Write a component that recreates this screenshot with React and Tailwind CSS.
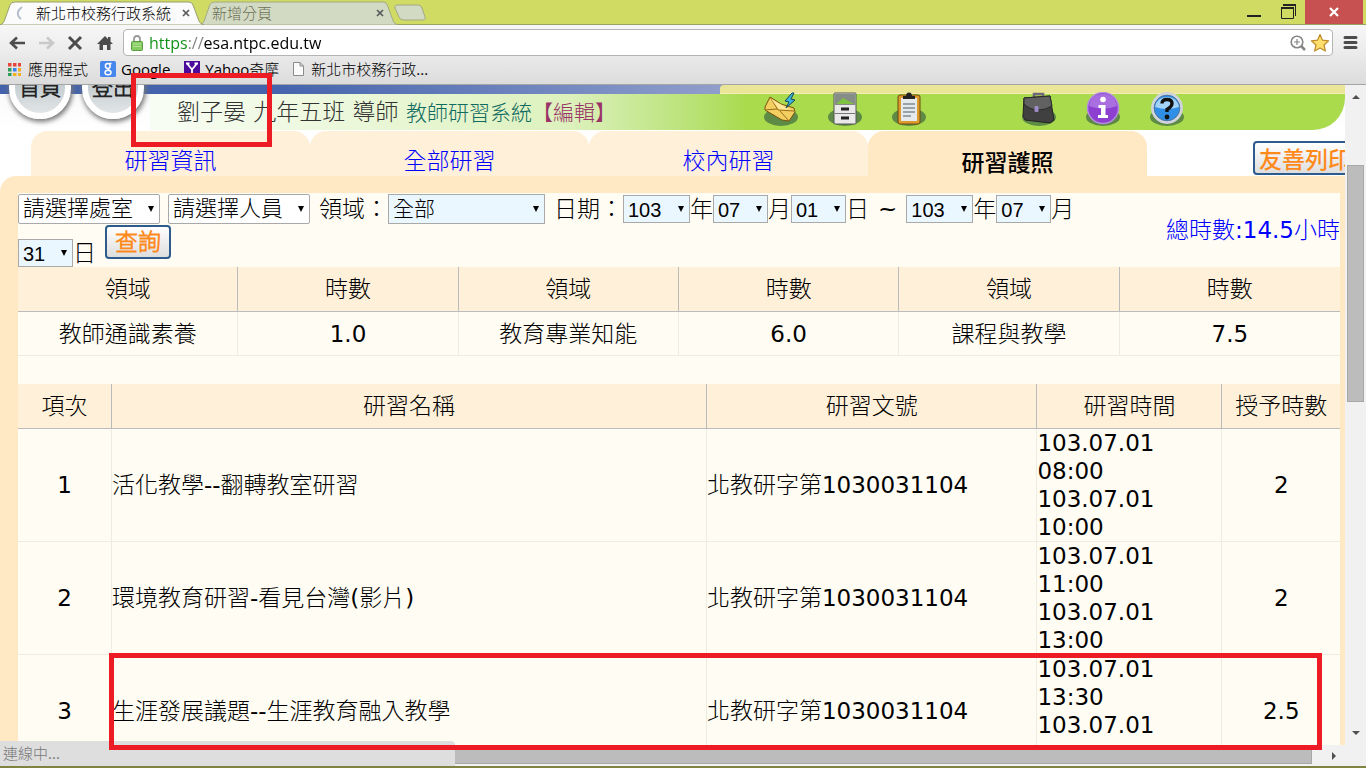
import React from "react";

const tabs = ["研習資訊", "全部研習", "校內研習", "研習護照"];

const summary = [
  { field: "教師通識素養", hours: "1.0" },
  { field: "教育專業知能", hours: "6.0" },
  { field: "課程與教學", hours: "7.5" },
];

const courses = [
  { id: 1, name: "活化教學--翻轉教室研習", doc: "北教研字第1030031104", time: ["103.07.01", "08:00", "103.07.01", "10:00"], hours: "2" },
  { id: 2, name: "環境教育研習-看見台灣(影片)", doc: "北教研字第1030031104", time: ["103.07.01", "11:00", "103.07.01", "13:00"], hours: "2" },
  { id: 3, name: "生涯發展議題--生涯教育融入教學", doc: "北教研字第1030031104", time: ["103.07.01", "13:30", "103.07.01"], hours: "2.5" },
];

function TabShape({ fill, stroke }) {
  return (
    <svg className="absolute inset-0 h-full w-full" viewBox="0 0 204 24" preserveAspectRatio="none" aria-hidden="true">
      <path d="M0 24 C3 23 4 21 5 18 L10 4 Q11 1 15 1 H189 Q192 1 193 4 L199 20 Q200 23 204 24 Z" fill={fill} stroke={stroke} />
    </svg>
  );
}

function CloseX() {
  return (
    <svg className="h-2 w-2" viewBox="0 0 8 8" aria-hidden="true">
      <path d="M1 1 L7 7 M7 1 L1 7" stroke="#5a5a5a" strokeWidth="1.7" />
    </svg>
  );
}

function TitleBar() {
  return (
    <div className="flex h-[25px] shrink-0 border-b border-[#9aa060] bg-[#cfdb63] text-[15px] leading-5">
      <div className="relative z-10 mt-px h-6 w-[204px]">
        <TabShape fill="#fbfbfb" stroke="#9a9f70" />
        <div className="relative flex h-full items-center pl-4 pr-[14px]">
          <svg className="mr-1 h-4 w-4 shrink-0" viewBox="0 0 16 16" aria-hidden="true">
            <path d="M6 2 Q-2 8 5 14" fill="none" stroke="#b3bccb" strokeWidth="1.8" />
          </svg>
          <span className="flex-1 whitespace-nowrap text-black">新北市校務行政系統</span>
          <button type="button" aria-label="關閉分頁"><CloseX /></button>
        </div>
      </div>
      <div className="relative -ml-1 mt-px h-6 w-[198px]">
        <TabShape fill="#d2dac4" stroke="#a2a985" />
        <div className="relative flex h-full items-center pl-3 pr-[14px]">
          <span className="flex-1 whitespace-nowrap text-[#6d6f56]">新增分頁</span>
          <button type="button" aria-label="關閉分頁"><CloseX /></button>
        </div>
      </div>
      <button type="button" aria-label="新增分頁" className="-ml-1 h-[25px] w-9">
        <svg className="h-full w-full" viewBox="0 0 36 25" aria-hidden="true">
          <path d="M1 8 Q0 5 4 5 H24 Q27 5 28 8 L31 17 Q32 20 28 20 H10 Q6 20 5 17 Z" fill="#d2dac4" stroke="#a2a985" />
        </svg>
      </button>
      <div className="ml-auto flex h-6">
        <button type="button" aria-label="最小化" className="flex w-9 justify-center">
          <svg className="h-6 w-4" viewBox="0 0 16 24"><path d="M2 16 H16" stroke="#222" strokeWidth="2" /></svg>
        </button>
        <button type="button" aria-label="還原" className="flex w-[34px] justify-center">
          <svg className="h-6 w-4" viewBox="0 0 16 24" fill="none" stroke="#222">
            <path d="M1.5 7.5 H13.5 V18.5 H1.5 Z" />
            <path d="M1 8 H14 M3 5 H16" strokeWidth="2" />
            <path d="M15.5 4 V16" />
          </svg>
        </button>
        <button type="button" aria-label="關閉" className="mr-[3px] flex w-[58px] items-center justify-center bg-[#c75050]">
          <svg className="h-[10px] w-[10px]" viewBox="0 0 10 10"><path d="M1 1 L9 9 M9 1 L1 9" stroke="#fff" strokeWidth="2.2" /></svg>
        </button>
      </div>
    </div>
  );
}

function Toolbar() {
  return (
    <div className="flex h-[33px] shrink-0 items-center bg-linear-to-b from-[#f7f7f7] to-[#e9e9e9] pl-2 pt-[2px]">
      <button type="button" aria-label="上一頁">
        <svg className="h-[18px] w-[18px]" viewBox="0 0 18 18" fill="none" stroke="#4c4c4c" strokeWidth="2.6"><path d="M17 9 H3 M9 3.5 L3 9 L9 14.5" /></svg>
      </button>
      <button type="button" aria-label="下一頁" className="ml-3">
        <svg className="h-[18px] w-[18px]" viewBox="0 0 18 18" fill="none" stroke="#c9c9c9" strokeWidth="2.6"><path d="M1 9 H14 M9 3.5 L15 9 L9 14.5" /></svg>
      </button>
      <button type="button" aria-label="停止" className="ml-[10px]">
        <svg className="h-[18px] w-[18px]" viewBox="0 0 18 18" stroke="#4c4c4c" strokeWidth="3"><path d="M3 3 L15 15 M15 3 L3 15" /></svg>
      </button>
      <button type="button" aria-label="首頁" className="ml-3">
        <svg className="h-[18px] w-[18px]" viewBox="0 0 18 18" fill="#4c4c4c">
          <path d="M9 2 L1 10 H3.5 V16 H7 V11 H11 V16 H14.5 V10 H17 L14.5 7.5 V3 H12 V5 Z" />
        </svg>
      </button>
      <div className="ml-[9px] flex h-[27px] flex-1 items-center rounded-sm border border-[#b4b4b4] bg-white pl-[7px] pr-[2px]">
        <svg className="h-[18px] w-3 shrink-0" viewBox="0 0 12 18" aria-hidden="true">
          <path d="M3 9 V5 Q3 2 6 2 Q9 2 9 5 V9" fill="none" stroke="#9a9a9a" strokeWidth="1.8" />
          <rect x="0.5" y="7.5" width="11" height="9" rx="1" fill="#86cc63" stroke="#5a9e43" />
          <path d="M2 10 H10 M2 12.5 H10" stroke="#b4e29a" />
        </svg>
        <input
          aria-label="網址"
          className="ml-[6px] h-full min-w-0 flex-1 bg-[linear-gradient(to_right,#0b8f12_39px,#808080_39px,#808080_54px,#000_54px)] bg-clip-text text-base text-transparent caret-black outline-none"
          defaultValue="https://esa.ntpc.edu.tw"
        />
        <svg className="h-4 w-4" viewBox="0 0 16 16" fill="none" stroke="#858585" aria-hidden="true">
          <circle cx="7" cy="7" r="5.8" strokeWidth="1.6" />
          <path d="M4 7 H10 M7 4 V10" strokeWidth="1.2" />
          <path d="M11 11 L15 15" strokeWidth="2.5" />
        </svg>
        <button type="button" aria-label="加入書籤" className="ml-1">
          <svg className="h-5 w-5" viewBox="0 0 20 20"><path d="M10 1.5 L12.5 7.2 L18.6 7.8 L14 12 L15.4 18 L10 14.9 L4.6 18 L6 12 L1.4 7.8 L7.5 7.2 Z" fill="#ffdf6b" stroke="#c08a2c" strokeWidth="1.2" strokeLinejoin="round" /></svg>
        </button>
      </div>
      <button type="button" aria-label="選單" className="ml-[10px] mr-2">
        <svg className="h-[15px] w-[15px]" viewBox="0 0 15 15" stroke="#4c4c4c" strokeWidth="3" strokeLinecap="round"><path d="M2 2.5 H13 M2 7.5 H13 M2 12.5 H13" /></svg>
      </button>
    </div>
  );
}

function BookmarksBar() {
  const dots = ["#e5453c", "#e5453c", "#e5453c", "#2b9c5a", "#3b82f0", "#f0b021", "#2b9c5a", "#f0b021", "#f0b021"];
  return (
    <nav className="flex h-[27px] shrink-0 items-center border-b border-[#a5a5a5] bg-linear-to-b from-[#e8e8e8] to-[#dcdcdc] pb-1 pl-2 text-[15px] leading-5 whitespace-nowrap">
      <a href="#apps" className="flex items-center">
        <svg className="mr-[7px] h-[13px] w-[13px]" viewBox="0 0 13 13" aria-hidden="true">
          {dots.map((c, i) => <rect key={i} x={(i % 3) * 5} y={Math.floor(i / 3) * 5} width="3.5" height="3.5" fill={c} />)}
        </svg>
        應用程式
      </a>
      <a href="#google" className="ml-3 flex items-center">
        <svg className="mr-[5px] h-4 w-4" viewBox="0 0 16 16" aria-hidden="true">
          <rect width="16" height="16" rx="1.5" fill="#4787ed" />
          <g fill="none" stroke="#fff" strokeWidth="1.5"><circle cx="7.8" cy="5" r="2.4" /><ellipse cx="8" cy="11.5" rx="3" ry="2.3" /><path d="M9 2.5 H11.5 M8 7.5 L9 9" /></g>
        </svg>
        Google
      </a>
      <a href="#yahoo" className="ml-[14px] flex items-center">
        <svg className="mr-[5px] h-4 w-4" viewBox="0 0 16 16" aria-hidden="true">
          <rect width="16" height="16" fill="#4b0a9b" />
          <path d="M3 2.5 L8 8.5 V14 M8 8.5 L13 2.5 M2 2.5 H5.5 M10.5 2.5 H14 M6 13.5 H10" fill="none" stroke="#fff" strokeWidth="1.8" />
        </svg>
        Yahoo奇摩
      </a>
      <a href="#school" className="ml-[14px] flex items-center">
        <svg className="mr-[7px] h-[14px] w-[11px]" viewBox="0 0 11 14" aria-hidden="true">
          <path d="M0.5 0.5 H7 L10.5 4 V13.5 H0.5 Z M7 0.5 V4 H10.5" fill="#fafafa" stroke="#8c8c8c" />
        </svg>
        新北市校務行政...
      </a>
    </nav>
  );
}

function RoundButton({ children }) {
  return (
    <button type="button" className="h-[62px] w-[62px] rounded-full border-[6px] border-white bg-linear-to-b from-[#aebbc2] to-[#e2e5e6] text-[21px] font-bold whitespace-nowrap text-[#222] shadow-[1px_2px_5px_1px_#777]">
      <span className="-mx-2">{children}</span>
    </button>
  );
}

function ToolIcon({ label, className = "", children }) {
  return (
    <a href="#tool" aria-label={label} className={className}>
      <svg className="h-9 w-9" viewBox="0 0 36 36">
        <ellipse cx="18" cy="25" rx="17" ry="9" fill="#5d8a45" />
        {children}
      </svg>
    </a>
  );
}

function ToolIcons() {
  return (
    <div className="mr-40 mb-1 ml-auto flex shrink-0 items-center gap-7">
      <ToolIcon label="訊息">
        <path d="M7 5 L18 12 L31 16 L32 20 L26 29 L19 28 L2 18 L2 15 Z" fill="#f3cf62" stroke="#7a5311" strokeLinejoin="round" />
        <path d="M7 5 L15 18 L31 19 M2 18 L14 17 M17 19 L26 29" fill="none" stroke="#9a6b18" />
        <path d="M8 7 L16 17 L28 18 Z" fill="#ffe89b" />
        <path d="M29 1 L22 9 L26 10 L23 16 L32 8 L28 7 L31 1 Z" fill="#3cb3d8" stroke="#164457" />
      </ToolIcon>
      <ToolIcon label="檔案櫃">
        <rect x="7" y="1" width="22" height="31" rx="1" fill="#e9e9e9" stroke="#555" />
        <rect x="7.5" y="2" width="21" height="11" fill="#868d87" />
        <path d="M9 12 L16 6 L27 12 Z" fill="#7ec242" />
        <path d="M8 21.5 H28" stroke="#777" />
        <path d="M14 17 H22 M14 26 H22" stroke="#222" strokeWidth="3" />
      </ToolIcon>
      <ToolIcon label="公告">
        <rect x="7" y="3" width="22" height="29" rx="2" fill="#dd9b2e" stroke="#6c480f" />
        <rect x="10" y="6" width="16" height="23" fill="#e5e9ec" />
        <path d="M12 12 H24 M12 16 H24 M12 20 H24 M12 24 H20" stroke="#7f8b96" strokeWidth="1.5" />
        <path d="M12 7 V4 H15 Q15 0.5 18 0.5 Q21 0.5 21 4 H24 V7 Z" fill="#222" />
      </ToolIcon>
      <ToolIcon label="公事包" className="ml-[66px]">
        <path d="M13 6 V2 H22 V5" fill="none" stroke="#6f6878" strokeWidth="2.5" />
        <path d="M3 6 L29 4 L33 28 L29 31 L4 28 L2 24 Z" fill="#404040" stroke="#222" />
        <path d="M3 6 L29 4 L31 14 Q24 18 18 18 Q9 18 3 12 Z" fill="#616161" stroke="#2a2a2a" />
        <rect x="13.5" y="14" width="4" height="6" rx="1" fill="#9c8bc4" />
      </ToolIcon>
      <ToolIcon label="資訊">
        <circle cx="18" cy="16" r="15.5" fill="#8d3fd0" stroke="#b58de0" strokeWidth="1.5" />
        <path d="M4 14 Q6 2 18 2 Q30 2 32 14 Q18 19 4 14 Z" fill="#a96fe0" />
        <circle cx="18" cy="7.5" r="2.8" fill="#fff" />
        <path d="M13.5 13 H20.5 V23 H23 V26 H13 V23 H16 V16 H13.5 Z" fill="#fff" />
      </ToolIcon>
      <ToolIcon label="說明">
        <circle cx="18" cy="16" r="14.4" fill="#2f8ee5" stroke="#cfd3dc" strokeWidth="3" />
        <circle cx="18" cy="16" r="12.8" fill="none" stroke="#5076a0" />
        <path d="M6 15 Q8 5 18 5 Q28 5 30 15 Q18 19 6 15 Z" fill="#a5d2f7" />
        <path d="M13 11.5 Q13 7.5 18 7.5 Q23 7.5 23 11.5 Q23 14.5 18 17.5 V20" fill="none" stroke="#111" strokeWidth="3.4" />
        <circle cx="18" cy="25" r="2.4" fill="#111" />
      </ToolIcon>
    </div>
  );
}

function SiteHeader() {
  return (
    <header className="relative shrink-0">
      <div className="flex h-[9px] bg-linear-to-r from-[#4463ac] from-20% to-[#93a0cc] to-55%">
        <div className="ml-auto w-[625px] max-w-1/2 rounded-tl-sm border-b border-[#f6edb5] bg-[#ebe697]" />
      </div>
      <div className="flex h-9 bg-linear-to-b from-[#fafafa] to-white">
        <div className="ml-[150px] flex flex-1 items-center rounded-br-[32px] bg-linear-to-r from-[#f8fdf4] via-[#ddf1bd] via-35% to-[#a9db4c] to-50% pl-[27px]">
          <p className="text-[23px] whitespace-nowrap text-[#333]">
            劉子晏 九年五班 導師{" "}
            <span className="text-[21px] text-[#0f6a5f]">教師研習系統</span>
            <a href="#edit" className="text-[21px] text-[#993366]">【編輯】</a>
          </p>
          <ToolIcons />
        </div>
      </div>
      <div className="absolute -top-7 left-[9px] flex gap-[11px]">
        <RoundButton>首頁</RoundButton>
        <RoundButton>登出</RoundButton>
      </div>
    </header>
  );
}

function ImageButton({ className = "", children }) {
  return (
    <button type="button" className={`h-[34px] shrink-0 rounded-sm border-2 border-[#2d5c8c] bg-linear-to-b from-white to-[#dedede] text-[23px] leading-7 whitespace-nowrap text-[#ff8a1c] ${className}`}>
      {children}
    </button>
  );
}

function PageTabs() {
  return (
    <nav className="flex shrink-0 bg-white pt-px pl-[31px]">
      {tabs.map((t, i) => (
        <a
          key={t}
          href="#tab"
          className={
            i === tabs.length - 1
              ? "flex h-[45px] w-[279px] items-center justify-center rounded-t-2xl bg-[#ffe8c4] pt-[14px] font-['Noto_Sans_CJK_TC',sans-serif] font-medium text-black"
              : "flex h-[45px] w-[279px] items-center justify-center rounded-t-2xl bg-[#fff0d9] pt-[14px] text-[#0000ff]"
          }
        >
          {t}
        </a>
      ))}
      <div className="flex-1 overflow-hidden pt-[10px]">
        <ImageButton className="ml-[106px] w-[104px] font-['Noto_Sans_CJK_TC',sans-serif] font-medium">友善列印</ImageButton>
      </div>
    </nav>
  );
}

function Select({ label, value, className }) {
  return (
    <span className="relative inline-flex">
      <select aria-label={label} defaultValue={value} className={`appearance-none border border-[#a9a9a9] pl-1 font-[Liberation_Sans,'Noto_Sans_CJK_TC_Light','Noto_Sans_CJK_TC',sans-serif] text-black ${className}`}>
        <option>{value}</option>
      </select>
      <svg className="pointer-events-none absolute top-1/2 right-[6px] h-[6px] w-[6px] -translate-y-1/2" viewBox="0 0 6 6" aria-hidden="true">
        <path d="M0 0 H6 L3 6 Z" fill="#000" />
      </svg>
    </span>
  );
}

const longSelect = "h-[30px] w-[142px] rounded-[2px] bg-white text-[22px]";
const yearSelect = "h-7 w-[67px] bg-[#ebf7ff] text-xl";
const daySelect = "h-7 w-[55px] bg-[#ebf7ff] text-xl";

function Filters() {
  return (
    <form className="flex items-center" onSubmit={(e) => e.preventDefault()}>
      <div className="flex flex-1 flex-wrap items-center gap-y-px pt-px pr-7">
        <Select label="處室" value="請選擇處室" className={longSelect} />
        <span className="w-2" />
        <Select label="人員" value="請選擇人員" className={longSelect} />
        <span className="ml-[9px]">領域：</span>
        <Select label="領域" value="全部" className="h-[30px] w-[157px] bg-[#ebf7ff] text-[21px]" />
        <span className="ml-[9px]">日期：</span>
        <Select label="開始年" value="103" className={yearSelect} />年
        <Select label="開始月" value="07" className={daySelect} />月
        <Select label="開始日" value="01" className={daySelect} />日
        <span className="mx-[9px]">~</span>
        <Select label="結束年" value="103" className={yearSelect} />年
        <Select label="結束月" value="07" className={daySelect} />月
        <div className="flex h-[42px] items-end">
          <Select label="結束日" value="31" className={daySelect} />日
          <ImageButton className="mb-2 ml-[9px] w-[66px] font-bold">查詢</ImageButton>
        </div>
      </div>
      <p className="whitespace-nowrap text-[#0000ff]">總時數:14.5小時</p>
    </form>
  );
}

const th = "h-[45px] border-b border-[#bbb] bg-[#fff0d9] font-normal not-last:border-r";
const td = "border-b border-[#eeebe0] not-last:border-r";

function SummaryTable() {
  return (
    <table className="w-full table-fixed border-separate border-spacing-0 text-center">
      <thead>
        <tr>
          {summary.map((s) => (
            <React.Fragment key={s.field}>
              <th className={th}>領域</th>
              <th className={th}>時數</th>
            </React.Fragment>
          ))}
        </tr>
      </thead>
      <tbody>
        <tr>
          {summary.map((s) => (
            <React.Fragment key={s.field}>
              <td className={`h-11 ${td}`}>{s.field}</td>
              <td className={`h-11 ${td}`}>{s.hours}</td>
            </React.Fragment>
          ))}
        </tr>
      </tbody>
    </table>
  );
}

function CourseTable() {
  return (
    <table className="mt-7 w-full table-fixed border-separate border-spacing-0">
      <thead>
        <tr>
          <th className={`w-[94px] ${th}`}>項次</th>
          <th className={`w-[45%] ${th}`}>研習名稱</th>
          <th className={`w-[25%] ${th}`}>研習文號</th>
          <th className={`w-[14%] ${th}`}>研習時間</th>
          <th className={th}>授予時數</th>
        </tr>
      </thead>
      <tbody>
        {courses.map((c) => (
          <tr key={c.id} className="h-[113px]">
            <td className={`text-center ${td}`}>{c.id}</td>
            <td className={td}>{c.name}</td>
            <td className={td}>{c.doc}</td>
            <td className={`align-top ${td}`}>
              {c.time.map((t, i) => <div key={i}>{t}</div>)}
            </td>
            <td className={`text-center ${td}`}>{c.hours}</td>
          </tr>
        ))}
      </tbody>
    </table>
  );
}

function VerticalScrollbar() {
  return (
    <div className="flex w-[21px] shrink-0 flex-col items-center bg-[#f1f1f1] py-2" aria-hidden="true">
      <svg className="h-2 w-2" viewBox="0 0 8 8"><path d="M0 6 L4 2 L8 6 Z" fill="#505050" /></svg>
      <div className="mt-16 h-[237px] w-[17px] border border-[#a8a8a8] bg-[#bcbcbc]" />
      <svg className="mt-auto h-2 w-2" viewBox="0 0 8 8"><path d="M0 2 L4 6 L8 2 Z" fill="#505050" /></svg>
    </div>
  );
}

function StatusRow() {
  return (
    <div className="relative flex h-[21px] shrink-0 items-center bg-[#f1f1f1]">
      <div className="absolute bottom-0 left-0 flex h-[25px] w-1/3 items-center rounded-tr-sm bg-[#dedede] pl-[3px] text-[15px] text-[#777]">連線中...</div>
      <div className="mr-[54px] ml-[33%] h-[17px] flex-1 border border-[#a8a8a8] bg-[#bcbcbc]" />
      <svg className="absolute right-7 h-2 w-2" viewBox="0 0 8 8" aria-hidden="true"><path d="M2 0 L6 4 L2 8 Z" fill="#505050" /></svg>
    </div>
  );
}

export default function App() {
  return (
    <div className="relative flex h-screen flex-col overflow-hidden bg-white font-['Open_Sans','Noto_Sans_CJK_TC_Light','Noto_Sans_CJK_TC',sans-serif] text-black">
      <TitleBar />
      <Toolbar />
      <BookmarksBar />
      <div className="flex min-h-0 flex-1">
        <main className="flex min-w-0 flex-1 flex-col overflow-hidden font-['DejaVu_Sans','Noto_Sans_CJK_TC_Light','Noto_Sans_CJK_TC',sans-serif] text-[23px] leading-7">
          <SiteHeader />
          <PageTabs />
          <div className="shrink-0 rounded-tl-2xl bg-[#ffe8c4] pt-[17px] pr-[5px] pl-[18px]">
            <div className="bg-[#fffcf3]">
              <Filters />
              <SummaryTable />
              <CourseTable />
            </div>
          </div>
        </main>
        <VerticalScrollbar />
      </div>
      <StatusRow />
      <div className="h-[2px] shrink-0 bg-[#7f8540]" />

      {/* red markers drawn over the window */}
      <div className="pointer-events-none absolute top-[73px] left-[131px] z-20 h-[74px] w-[141px] border-[5px] border-[#ed1c24]" />
      <div className="pointer-events-none absolute top-[653px] right-11 left-[109px] z-20 h-[97px] border-[5px] border-[#ed1c24]" />
    </div>
  );
}
